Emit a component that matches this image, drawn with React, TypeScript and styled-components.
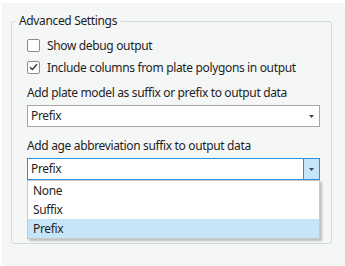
import React, { FC } from 'react'
import styled, { createGlobalStyle } from 'styled-components'

const GlobalStyle = createGlobalStyle`
body {
    margin: 0;
    background: #ffffff;
    font-family: "Noto Sans", "Open Sans", sans-serif;
    font-size: 12px;
    letter-spacing: -0.35px;
    color: #1e1e1e;
}
`

const Page = styled.div`
width: 345px;
height: 266px;
padding: 3px 0 0 2px;
box-sizing: border-box;
`

const Panel = styled.div`
height: 100%;
background: #f5f6f6;
padding: 9px 13px 0 9px;
box-sizing: border-box;
`

const Group = styled.fieldset`
margin: 0;
padding: 4px 11px 0 15px;
border: 1px solid #d6d9d9;
border-radius: 3px;
height: 232px;
box-sizing: border-box;
position: relative;

legend {
    padding: 0 4px;
    margin-left: -12px;
    line-height: 18px;
    font-size: 12px;
    color: #1e1e1e;
}
`

const CheckRow = styled.label`
display: flex;
align-items: center;
gap: 7px;
height: 22px;
`

const Box = styled.span`
width: 13px;
height: 13px;
box-sizing: border-box;
border: 1px solid #8c8c8c;
border-radius: 2px;
background: #ffffff;
display: flex;
align-items: center;
justify-content: center;
`

const FieldLabel = styled.div<{ $gap: number }>`
line-height: 18px;
margin-top: ${p => p.$gap}px;
`

const SelectBox = styled.div<{ $active?: boolean }>`
position: relative;
margin-top: 3px;
height: 22px;
box-sizing: border-box;
border: 1px solid ${p => (p.$active ? '#2b8fd9' : '#a6a6a6')};
background: #ffffff;
display: flex;
align-items: stretch;

.value {
    flex: 1;
    padding-left: 3px;
    line-height: 20px;
}
.arrow {
    width: 15px;
    display: flex;
    align-items: center;
    justify-content: center;
    background: ${p => (p.$active ? '#c6e5f8' : 'transparent')};
    border-left: 1px solid ${p => (p.$active ? '#2b8fd9' : 'transparent')};
}
`

const Menu = styled.div`
position: absolute;
left: -1px;
right: -1px;
top: 21px;
background: #ffffff;
border: 1px solid #c9c9c9;
box-shadow: 2px 2px 2px rgba(0, 0, 0, 0.22);
z-index: 2;
`

const MenuItem = styled.div<{ $selected?: boolean }>`
height: 19px;
line-height: 19px;
padding-left: 5px;
background: ${p => (p.$selected ? '#c6e5f8' : 'transparent')};
`

const Check = () => (
    <svg width="9" height="8" viewBox="0 0 9 8">
        <path d="M1 4.2 L3.4 6.5 L8 1.2" fill="none" stroke="#333" strokeWidth="1.4" />
    </svg>
)

const Arrow = () => (
    <svg width="5" height="3" viewBox="0 0 5 3">
        <path d="M0 0 H5 L2.5 3 Z" fill="#444" />
    </svg>
)

const options = ['None', 'Suffix', 'Prefix']

const App: FC = () => {
    return (
        <Page>
            <GlobalStyle />
            <Panel>
                <Group>
                    <legend>Advanced Settings</legend>
                    <CheckRow>
                        <Box />
                        <span>Show debug output</span>
                    </CheckRow>
                    <CheckRow>
                        <Box><Check /></Box>
                        <span>Include columns from plate polygons in output</span>
                    </CheckRow>
                    <FieldLabel $gap={6}>Add plate model as suffix or prefix to output data</FieldLabel>
                    <SelectBox>
                        <span className='value'>Prefix</span>
                        <span className='arrow'><Arrow /></span>
                    </SelectBox>
                    <FieldLabel $gap={10}>Add age abbreviation suffix to output data</FieldLabel>
                    <SelectBox $active>
                        <span className='value'>Prefix</span>
                        <span className='arrow'><Arrow /></span>
                        <Menu>
                            {options.map(o => (
                                <MenuItem key={o} $selected={o === 'Prefix'}>{o}</MenuItem>
                            ))}
                        </Menu>
                    </SelectBox>
                </Group>
            </Panel>
        </Page>
    )
}

export default App
